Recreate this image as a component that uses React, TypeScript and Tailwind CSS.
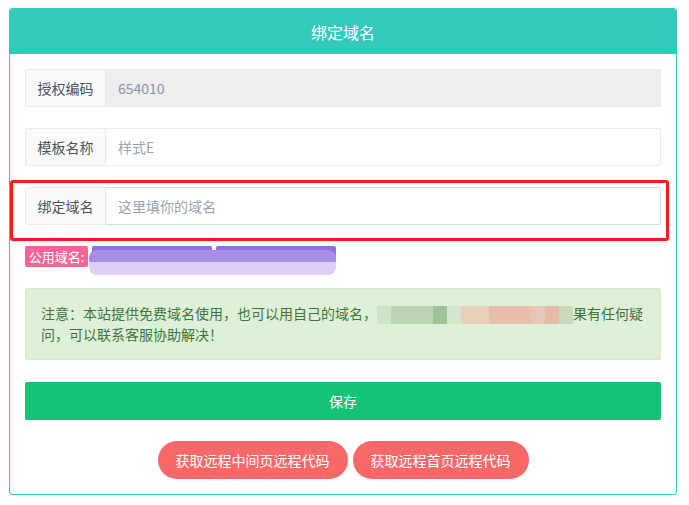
import React, { useState } from 'react';

const font = { fontFamily: '"Noto Sans CJK SC", "Noto Sans", sans-serif' };

const Field = ({
  label,
  value,
  placeholder,
  disabled,
  focused,
  onChange,
}: {
  label: string;
  value?: string;
  placeholder?: string;
  disabled?: boolean;
  focused?: boolean;
  onChange?: (v: string) => void;
}) => (
  <div className="flex h-[38px] w-full">
    <span className="flex items-center justify-center w-[81px] shrink-0 bg-[#f9fafb] border border-[#ebebeb] rounded-l-[2px] text-[14px] text-[#4d5259]">
      {label}
    </span>
    <input
      value={value}
      placeholder={placeholder}
      disabled={disabled}
      readOnly={!onChange}
      autoFocus={focused}
      onChange={e => onChange && onChange(e.target.value)}
      className={`flex-1 min-w-0 h-full px-3 text-[14px] text-[#8b95a5] placeholder:text-[#9aa3b0] border border-l-0 rounded-r-[2px] outline-none ${
        disabled
          ? 'bg-[#eeeeee] border-[#ebebeb]'
          : focused
          ? 'bg-white border-[#c4e4e1] caret-[#4d5259]'
          : 'bg-white border-[#ebebeb]'
      }`}
      style={font}
    />
  </div>
);

const App = () => {
  const [domain, setDomain] = useState('');

  return (
    <div className="min-h-screen bg-white pt-2 pl-[9px] pr-3" style={font}>
      <div className="w-[668px] border border-[#33cabb] rounded-[3px] overflow-hidden bg-white">
        {/* Header */}
        <div className="h-[45px] bg-[#33cabb] flex items-center justify-center text-white text-[16px]">
          绑定域名
        </div>

        {/* Body */}
        <div className="px-[15px] pt-[15px] pb-[15px] flex flex-col">
          <div className="mb-[21px]">
            <Field label="授权编码" value="654010" disabled />
          </div>
          <div className="mb-[21px]">
            <Field label="模板名称" placeholder="样式E" />
          </div>
          <div className="relative mb-[21px]">
            <Field
              label="绑定域名"
              placeholder="这里填你的域名"
              focused
              value={domain}
              onChange={setDomain}
            />
            {/* annotation frame */}
            <div className="absolute -left-[15px] -right-[8px] -top-[7px] -bottom-[16px] border-[3px] border-[#ff1a1a] rounded-[3px] pointer-events-none" />
          </div>

          {/* Public domains */}
          <div className="flex items-start gap-1 mb-[20px]">
            <span className="h-[21px] w-[63px] flex items-center justify-center rounded-[2px] bg-[#f5659a] text-white text-[13px]">
              公用域名:
            </span>
            <div className="relative flex gap-1">
              <span className="block w-[120px] h-[22px] rounded-[2px] bg-[#926dde]" />
              <span className="block w-[120px] h-[22px] rounded-[2px] bg-[#926dde]" />
              <div className="absolute -left-[3px] right-0 top-[4px] h-[25px] rounded-[8px] overflow-hidden flex flex-col pointer-events-none">
                <div className="h-[12px] bg-[#a88de6]" />
                <div className="flex-1 bg-[#dcd0f4]" />
              </div>
            </div>
          </div>

          {/* Notice */}
          <div className="bg-[#dff0d8] border border-[#d6e9c6] rounded-[2px] px-[15px] py-[14px] text-[14px] leading-[21px] text-[#3c763d]">
            注意：本站提供免费域名使用，也可以用自己的域名，
            <span className="inline-flex align-middle w-[196px] h-[18px]">
              <span className="w-[14px] bg-[#cfe3c7]" />
              <span className="w-[42px] bg-[#bcd5b4]" />
              <span className="w-[14px] bg-[#9fc29d]" />
              <span className="w-[14px] bg-[#d4e6cb]" />
              <span className="w-[28px] bg-[#e8cfb8]" />
              <span className="w-[42px] bg-[#e8bfae]" />
              <span className="w-[14px] bg-[#e6c6b6]" />
              <span className="w-[14px] bg-[#e5bba9]" />
              <span className="w-[14px] bg-[#c9d8bc]" />
            </span>
            果有任何疑问，可以联系客服协助解决！
          </div>

          {/* Save */}
          <button
            type="button"
            className="mt-[22px] h-[38px] w-full rounded-[2px] bg-[#15c377] text-white text-[14px]"
          >
            保存
          </button>

          {/* Remote code */}
          <div className="mt-[21px] flex justify-center gap-[5px]">
            <button
              type="button"
              className="h-[38px] px-[18px] rounded-full bg-[#f96868] text-white text-[14px]"
            >
              获取远程中间页远程代码
            </button>
            <button
              type="button"
              className="h-[38px] px-[18px] rounded-full bg-[#f96868] text-white text-[14px]"
            >
              获取远程首页远程代码
            </button>
          </div>
        </div>
      </div>
    </div>
  );
};

export default App;
